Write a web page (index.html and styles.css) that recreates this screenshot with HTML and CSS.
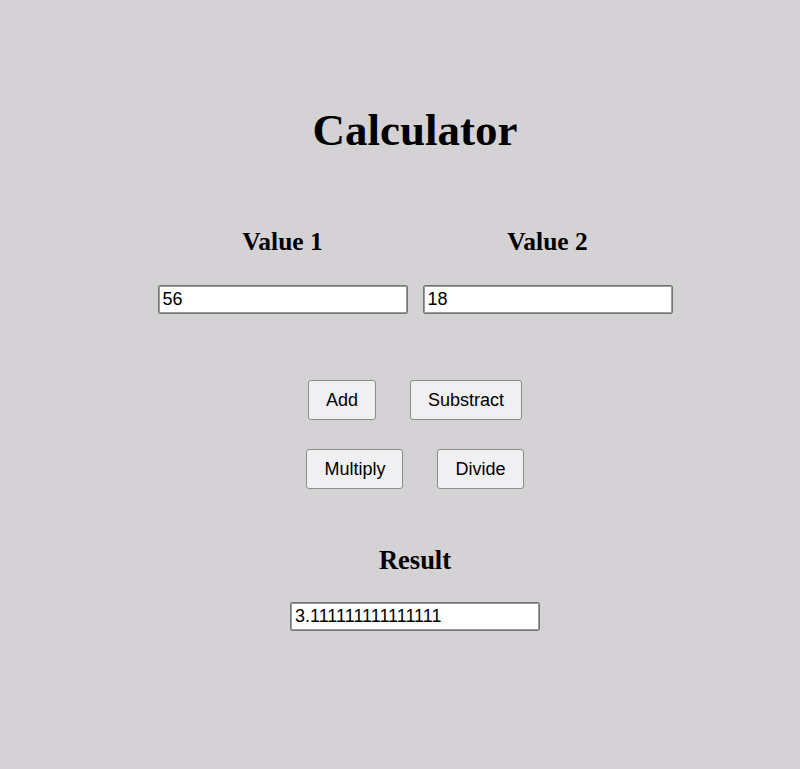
FILE: index.html
```html
<!DOCTYPE html>
<html lang="en">
<head>
<meta charset="utf-8">
<title>Calculator</title>
<link rel="stylesheet" href="styles.css">
</head>
<body>
<main class="calc">
  <h1 class="title">Calculator</h1>
  <div class="values">
    <div class="field">
      <h3 class="label">Value 1</h3>
      <input class="box" type="text" value="56">
    </div>
    <div class="field">
      <h3 class="label">Value 2</h3>
      <input class="box" type="text" value="18">
    </div>
  </div>
  <div class="ops">
    <div class="row">
      <button class="btn">Add</button>
      <button class="btn">Substract</button>
    </div>
    <div class="row">
      <button class="btn">Multiply</button>
      <button class="btn">Divide</button>
    </div>
  </div>
  <div class="result">
    <h3 class="label">Result</h3>
    <input class="box" type="text" value="3.111111111111111">
  </div>
</main>
</body>
</html>
```

FILE: styles.css
```css
html, body {
  margin: 0;
  padding: 0;
  background: #d4d2d5;
}
body {
  font-family: "Liberation Serif", "Times New Roman", serif;
  color: #000;
}
.calc {
  width: 530px;
  margin-left: 150px;
  padding-top: 104px;
  display: flex;
  flex-direction: column;
  align-items: center;
}
.title {
  margin: 0;
  font-size: 45px;
  line-height: 52px;
  font-weight: bold;
}
.values {
  display: flex;
  gap: 15px;
  margin-top: 72px;
}
.field {
  display: flex;
  flex-direction: column;
  align-items: center;
}
.label {
  margin: 0;
  font-size: 25.5px;
  line-height: 28px;
  font-weight: bold;
}
.field .box {
  margin-top: 29px;
}
.box {
  box-sizing: border-box;
  width: 250px;
  height: 29px;
  padding: 2px 4px;
  font-family: "Liberation Sans", Arial, sans-serif;
  font-size: 18px;
  color: #000;
  background: #fff;
  border: 1px solid #767676;
  border-radius: 2px;
  box-shadow: inset 0 0 0 1px #9a9a9a;
}
.ops {
  margin-top: 66px;
  display: flex;
  flex-direction: column;
  align-items: center;
  gap: 29px;
}
.row {
  display: flex;
  gap: 34px;
}
.btn {
  box-sizing: border-box;
  height: 40px;
  padding: 0 17px;
  font-family: "Liberation Sans", Arial, sans-serif;
  font-size: 18px;
  color: #000;
  background: #f0eff1;
  border: 1px solid #8c8c8c;
  border-radius: 3px;
}
.result {
  margin-top: 56px;
  display: flex;
  flex-direction: column;
  align-items: center;
}
.result .label {
  font-size: 26.5px;
  line-height: 30px;
}
.result .box {
  margin-top: 27px;
}
```
